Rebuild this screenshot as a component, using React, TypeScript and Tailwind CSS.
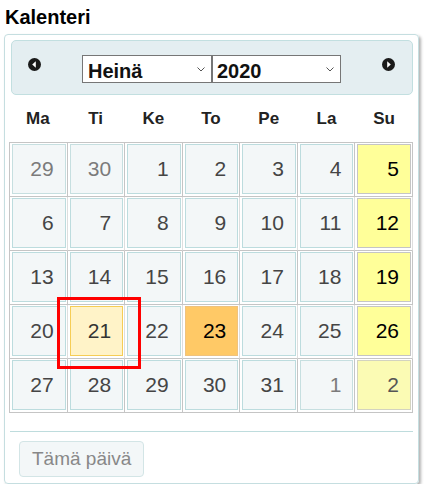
import React from 'react';

type Day = { n: number; other?: boolean; today?: boolean; selected?: boolean };

const weeks: Day[][] = [
  [{ n: 29, other: true }, { n: 30, other: true }, { n: 1 }, { n: 2 }, { n: 3 }, { n: 4 }, { n: 5 }],
  [{ n: 6 }, { n: 7 }, { n: 8 }, { n: 9 }, { n: 10 }, { n: 11 }, { n: 12 }],
  [{ n: 13 }, { n: 14 }, { n: 15 }, { n: 16 }, { n: 17 }, { n: 18 }, { n: 19 }],
  [{ n: 20 }, { n: 21, today: true }, { n: 22 }, { n: 23, selected: true }, { n: 24 }, { n: 25 }, { n: 26 }],
  [{ n: 27 }, { n: 28 }, { n: 29 }, { n: 30 }, { n: 31 }, { n: 1, other: true }, { n: 2, other: true }],
];

const dayNames = ['Ma', 'Ti', 'Ke', 'To', 'Pe', 'La', 'Su'];

const CircleArrow = ({ dir }: { dir: 'w' | 'e' }) => (
  <svg width="13" height="13" viewBox="0 0 13 13">
    <circle cx="6.5" cy="6.5" r="6.5" fill="#1a1a1a" />
    {dir === 'w' ? (
      <path d="M7.8 3.2 L4.2 6.5 L7.8 9.8 Z" fill="#fff" />
    ) : (
      <path d="M5.2 3.2 L8.8 6.5 L5.2 9.8 Z" fill="#fff" />
    )}
  </svg>
);

const Chevron = () => (
  <svg width="8" height="5" viewBox="0 0 8 5" className="pointer-events-none absolute right-[7px] top-[12px]">
    <path d="M0.5 0.5 L4 4 L7.5 0.5" fill="none" stroke="#555" strokeWidth="1" />
  </svg>
);

const DayCell = ({ d, col }: { d: Day; col: number }) => {
  const sunday = col === 6;
  let cls = 'bg-[#f3f7f8] border-[#bcdcde] text-[#454545]';
  if (d.other) cls = 'bg-[#f3f7f8] border-[#c6dfe0] text-[#7b7b7b]';
  if (sunday) cls = d.other ? 'bg-[#fbfbb4] border-[#d3d3c0] text-[#555]' : 'bg-[#ffff99] border-[#c5c5c5] text-black';
  if (d.today) cls = 'bg-[#fff3c8] border-[#f6cd55] text-[#333]';
  if (d.selected) cls = 'bg-[#ffc966] border-[#efc27e] text-black';
  return (
    <div className={`flex h-[50px] items-center justify-end border pr-[11px] text-[21px] ${cls}`}>
      {d.n}
    </div>
  );
};

export default function App() {
  return (
    <div className="bg-white pl-[4px] pt-[5px] font-['Liberation_Sans',Arial,sans-serif]">
      <h2 className="h-[24px] pl-[1px] text-[20px] font-bold leading-[24px] text-black">Kalenteri</h2>

      <div className="mt-[5px] w-[415px] rounded-[4px] border border-[#c5dee0] pb-[6px] pl-[4px] pr-[5px] pt-[5px] shadow-[2px_2px_3px_rgba(0,0,0,0.3)]">
        {/* otsikko: kuukausi ja vuosi */}
        <div className="ml-[2px] flex h-[55px] items-start rounded-[5px] border border-[#c2dfe0] bg-[#e4eef1]">
          <button className="ml-[16px] mt-[17px] flex">
            <CircleArrow dir="w" />
          </button>
          <div className="ml-[41px] mt-[14px] flex">
            <div className="relative">
              <select
                defaultValue="6"
                className="h-[28px] w-[130px] appearance-none rounded-none border border-[#767676] bg-white pl-[5px] text-[20px] font-bold text-[#111] outline-none"
              >
                <option value="6">Heinä</option>
              </select>
              <Chevron />
            </div>
            <div className="relative">
              <select
                defaultValue="2020"
                className="h-[28px] w-[129px] appearance-none rounded-none border border-[#767676] bg-white pl-[4px] text-[20px] font-bold text-[#111] outline-none"
              >
                <option value="2020">2020</option>
              </select>
              <Chevron />
            </div>
          </div>
          <button className="ml-[41px] mt-[17px] flex">
            <CircleArrow dir="e" />
          </button>
        </div>

        {/* viikonpäivät */}
        <div className="grid h-[47px] w-[404px] grid-cols-7 items-center text-center text-[17px] font-bold text-[#222]">
          {dayNames.map((n) => (
            <div key={n}>{n}</div>
          ))}
        </div>

        {/* päivät */}
        <div className="relative w-[404px] border-l border-t border-l-[#c5c5c5] border-t-[#c5c5c5]">
          {weeks.map((w, ri) => (
            <div key={ri} className="grid grid-cols-7">
              {w.map((d, ci) => (
                <div
                  key={ci}
                  className={`border-b border-r border-b-[#c5c5c5] pb-[2px] pl-[2px] pr-[1px] pt-[1px] ${
                    ri % 2 === 0 ? 'border-r-[#c5c5c5]' : 'border-r-[#dedede]'
                  }`}
                >
                  <DayCell d={d} col={ci} />
                </div>
              ))}
            </div>
          ))}
          <div className="pointer-events-none absolute left-[47px] top-[154px] h-[72px] w-[84px] border-[3px] border-[#ff0000]" />
        </div>

        {/* alapalkki */}
        <div className="ml-[1px] mt-[18px] border-t border-[#bedcdd] pl-[9px] pt-[9px]">
          <button className="h-[36px] rounded-[4px] border border-[#d3e5e6] bg-[#f3f7f8] px-[12px] text-[19px] text-[#888]">
            Tämä päivä
          </button>
        </div>
      </div>
    </div>
  );
}
